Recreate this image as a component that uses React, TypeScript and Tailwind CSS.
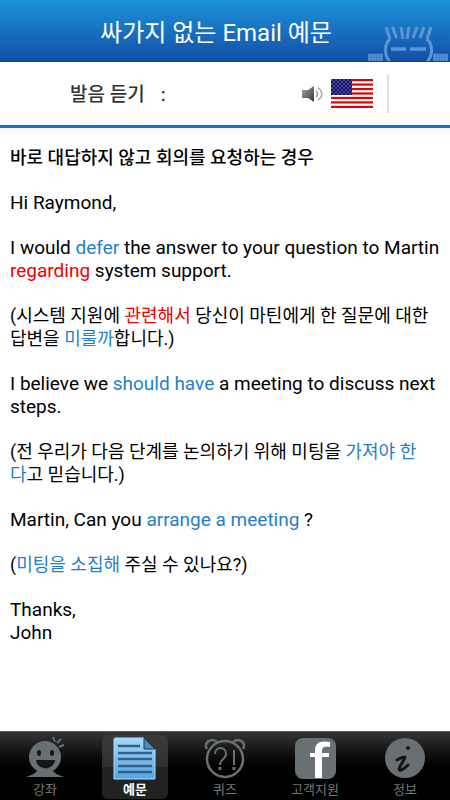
import type { ReactNode } from 'react';

const FONT = "font-[Roboto,'Noto_Sans_CJK_KR',sans-serif]";

function Blue({ children }: { children: ReactNode }) {
  return <span className="text-[#1f7fcb]">{children}</span>;
}

function Red({ children }: { children: ReactNode }) {
  return <span className="text-[#ee0000]">{children}</span>;
}

function Mascot() {
  return (
    <svg className="absolute right-0 bottom-0 h-9 w-[83px]" viewBox="0 0 83 36" fill="none" stroke="#5d97d3" aria-hidden="true">
      <g strokeWidth="3">
        <path d="M19 2l4 12M25.500 2l4 11M34 2l2 12M42 2l-2 12M50 2l-4 11M57 2l-4 11M64 2l-4 12" />
        <path d="M23 14c-6 6-6 16 0 23M60 14c6 6 6 16 0 23" />
      </g>
      <path d="M24 24h15M43 24h16" strokeWidth="3.500" />
      <path
        d="M2.500 29v7M5.500 29v7M8.500 29v7M11.500 29v7M14.500 29v7M67.500 29v7M70.500 29v7M73.500 29v7M76.500 29v7M79.500 29v7"
        strokeWidth="2"
      />
      <path d="M1 32h15M66 32h15" strokeWidth="7" opacity="0.4" />
    </svg>
  );
}

function SpeakerIcon() {
  return (
    <svg className="h-5 w-[22px]" viewBox="0 0 22 20" fill="none" aria-hidden="true">
      <defs>
        <linearGradient id="speaker" x1="0" y1="0" x2="1" y2="1">
          <stop offset="0" stopColor="#aaa" />
          <stop offset="1" stopColor="#333" />
        </linearGradient>
      </defs>
      <path d="M1 6h6l6-4v16l-6-4H1z" fill="url(#speaker)" />
      <path d="M15 7c2 1 2 5 0 6" stroke="#999" strokeWidth="1.500" />
      <path d="M17 4c5 3 5 9 0 12" stroke="#aaa" strokeWidth="1.500" />
    </svg>
  );
}

function UsFlag() {
  return (
    <svg className="h-[29px] w-[42px]" viewBox="0 0 42 29" aria-hidden="true">
      <defs>
        <pattern id="stars" width="4" height="4" patternUnits="userSpaceOnUse">
          <circle cx="1" cy="1" r="0.700" fill="#aaaadd" />
          <circle cx="3" cy="3" r="0.700" fill="#aaaadd" />
        </pattern>
      </defs>
      <rect width="42" height="29" fill="#fff" />
      {[0, 1, 2, 3, 4, 5, 6].map((i) => (
        <rect key={i} y={(i * 2 * 29) / 13} width="42" height={29 / 13} fill="#d60909" />
      ))}
      <rect width="21" height="16" fill="#10106a" />
      <rect width="21" height="16" fill="url(#stars)" />
    </svg>
  );
}

function LectureIcon() {
  return (
    <svg className="size-11" viewBox="0 0 44 44" aria-hidden="true">
      <g fill="#697073">
        <circle cx="22" cy="20" r="16" />
        <path d="M3 40c6-2 10-4 12-7h14c2 3 6 5 12 7z" />
      </g>
      <path d="M32 5l-2-5M34 6l4-4M36 10l5-2" stroke="#697073" strokeWidth="2" />
      <ellipse cx="16" cy="16" rx="2" ry="3" fill="#151515" />
      <ellipse cx="29" cy="16" rx="2" ry="3" fill="#151515" />
      <path d="M13 23h19c-1 11-18 11-19 0z" fill="#151515" />
    </svg>
  );
}

function DocumentIcon() {
  return (
    <svg className="size-11" viewBox="0 0 44 44" aria-hidden="true">
      <defs>
        <linearGradient id="doc" x1="0" y1="0" x2="0" y2="1">
          <stop offset="0" stopColor="#a5d8fa" />
          <stop offset="1" stopColor="#55a6e2" />
        </linearGradient>
      </defs>
      <path d="M2 1h29l11 11v30H1V2z" fill="url(#doc)" stroke="#a9dcff" />
      <path d="M31 1v11h11z" fill="#3f8ecb" stroke="#24384c" />
      <path d="M5 9h22M5 16h34M5 22h34M5 29h34M5 35h34" stroke="#335f85" strokeWidth="2.500" />
    </svg>
  );
}

function QuizIcon() {
  return (
    <svg className="size-11" viewBox="0 0 44 44" fill="none" stroke="#697073" strokeWidth="2.500" aria-hidden="true">
      <circle cx="22" cy="22" r="18" />
      <path d="M4 12C0 6 8 0 14 5M40 12c4-6-4-12-10-7" />
      <path d="M12 17c0-8 11-8 11 0 0 5-6 5-6 11M31 13v15" strokeWidth="2" />
      <path d="M17 30v3M31 30v3" strokeWidth="3" />
    </svg>
  );
}

function FacebookIcon() {
  return (
    <svg className="size-11" viewBox="0 0 44 44" aria-hidden="true">
      <rect x="2" y="1" width="41" height="41" rx="8" fill="#697073" />
      <path d="M22 41V20h-5v-4h5v-3c0-7 5-10 15-8v5c-6-1-8 0-8 4v2h7v4h-7v21z" fill="#fff" />
    </svg>
  );
}

function InfoIcon() {
  return (
    <svg className="size-11" viewBox="0 0 44 44" aria-hidden="true">
      <circle cx="22" cy="21" r="20" fill="#697073" />
      <circle cx="25" cy="11" r="2" fill="#151515" />
      <path
        d="M14 23c3-2 5-3 8-3-1 4-5 8-6 12 0 3 5 0 9-4"
        fill="none"
        stroke="#151515"
        strokeWidth="3"
        strokeLinecap="round"
        strokeLinejoin="round"
      />
    </svg>
  );
}

const tabs = [
  { label: '강좌', icon: <LectureIcon /> },
  { label: '예문', icon: <DocumentIcon />, active: true },
  { label: '퀴즈', icon: <QuizIcon /> },
  { label: '고객지원', icon: <FacebookIcon /> },
  { label: '정보', icon: <InfoIcon /> },
];

export default function App() {
  return (
    <div className={`flex min-h-screen flex-col bg-white text-black ${FONT}`}>
      <header className="relative flex h-[62px] items-center justify-center border-b border-[#0b46a0] bg-linear-to-b from-[#1e93d9] to-[#144fa8] pt-1 pr-[18px]">
        <h1 className="text-2xl text-white">싸가지 없는 Email 예문</h1>
        <Mascot />
      </header>

      <div className="flex h-[66px] items-center border-b-[3px] border-[#1671c1] pr-[61px] pl-[70px]">
        <p className="flex flex-1 gap-4 pt-1 text-[19px] font-medium text-[#333]">
          <span>발음 듣기</span>
          <span>:</span>
        </p>
        <button type="button" aria-label="발음 듣기" className="flex items-center gap-2">
          <SpeakerIcon />
          <UsFlag />
        </button>
        <span className="ml-[14px] h-[38px] w-0.5 bg-[#e0e0e0]" />
      </div>

      <main className="flex flex-1 flex-col gap-[22px] bg-linear-to-b from-[#f7f7f7] to-white to-[12px] px-[10px] pt-[18px] pb-6 text-[19px] leading-[23px]">
        <h2 className="text-lg leading-[23px] font-medium">바로 대답하지 않고 회의를 요청하는 경우</h2>
        <p>Hi Raymond,</p>
        <p>
          I would <Blue>defer</Blue> the answer to your question to Martin <Red>regarding</Red> system support.
        </p>
        <p className="text-lg leading-[23px]">
          (시스템 지원에 <Red>관련해서</Red> 당신이 마틴에게 한 질문에 대한 답변을 <Blue>미룰까</Blue>합니다.)
        </p>
        <p>
          I believe we <Blue>should have</Blue> a meeting to discuss next steps.
        </p>
        <p className="text-lg leading-[23px]">
          (전 우리가 다음 단계를 논의하기 위해 미팅을{' '}
          <Blue>
            가져야 한
            <br />다
          </Blue>
          고 믿습니다.)
        </p>
        <p>
          Martin, Can you <Blue>arrange a meeting</Blue> ?
        </p>
        <p className="text-lg leading-[23px]">
          (<Blue>미팅을 소집해</Blue> 주실 수 있나요?)
        </p>
        <p>
          Thanks,
          <br />
          John
        </p>
      </main>

      <nav className="grid h-[69px] grid-cols-5 justify-items-center border-t border-[#555] bg-linear-to-b from-[#343434] to-black to-70% pt-[3px]">
        {tabs.map((tab) => (
          <button
            key={tab.label}
            type="button"
            aria-current={tab.active ? 'page' : undefined}
            className={`flex h-16 w-[66px] flex-col items-center rounded-md pt-[2px] text-[13px] leading-[18px] ${
              tab.active
                ? 'bg-linear-to-b from-[#3a3a3a] from-0% via-[#303030] via-50% to-[#222] to-50% font-bold text-white'
                : 'text-[#777]'
            }`}
          >
            {tab.icon}
            {tab.label}
          </button>
        ))}
      </nav>
    </div>
  );
}
